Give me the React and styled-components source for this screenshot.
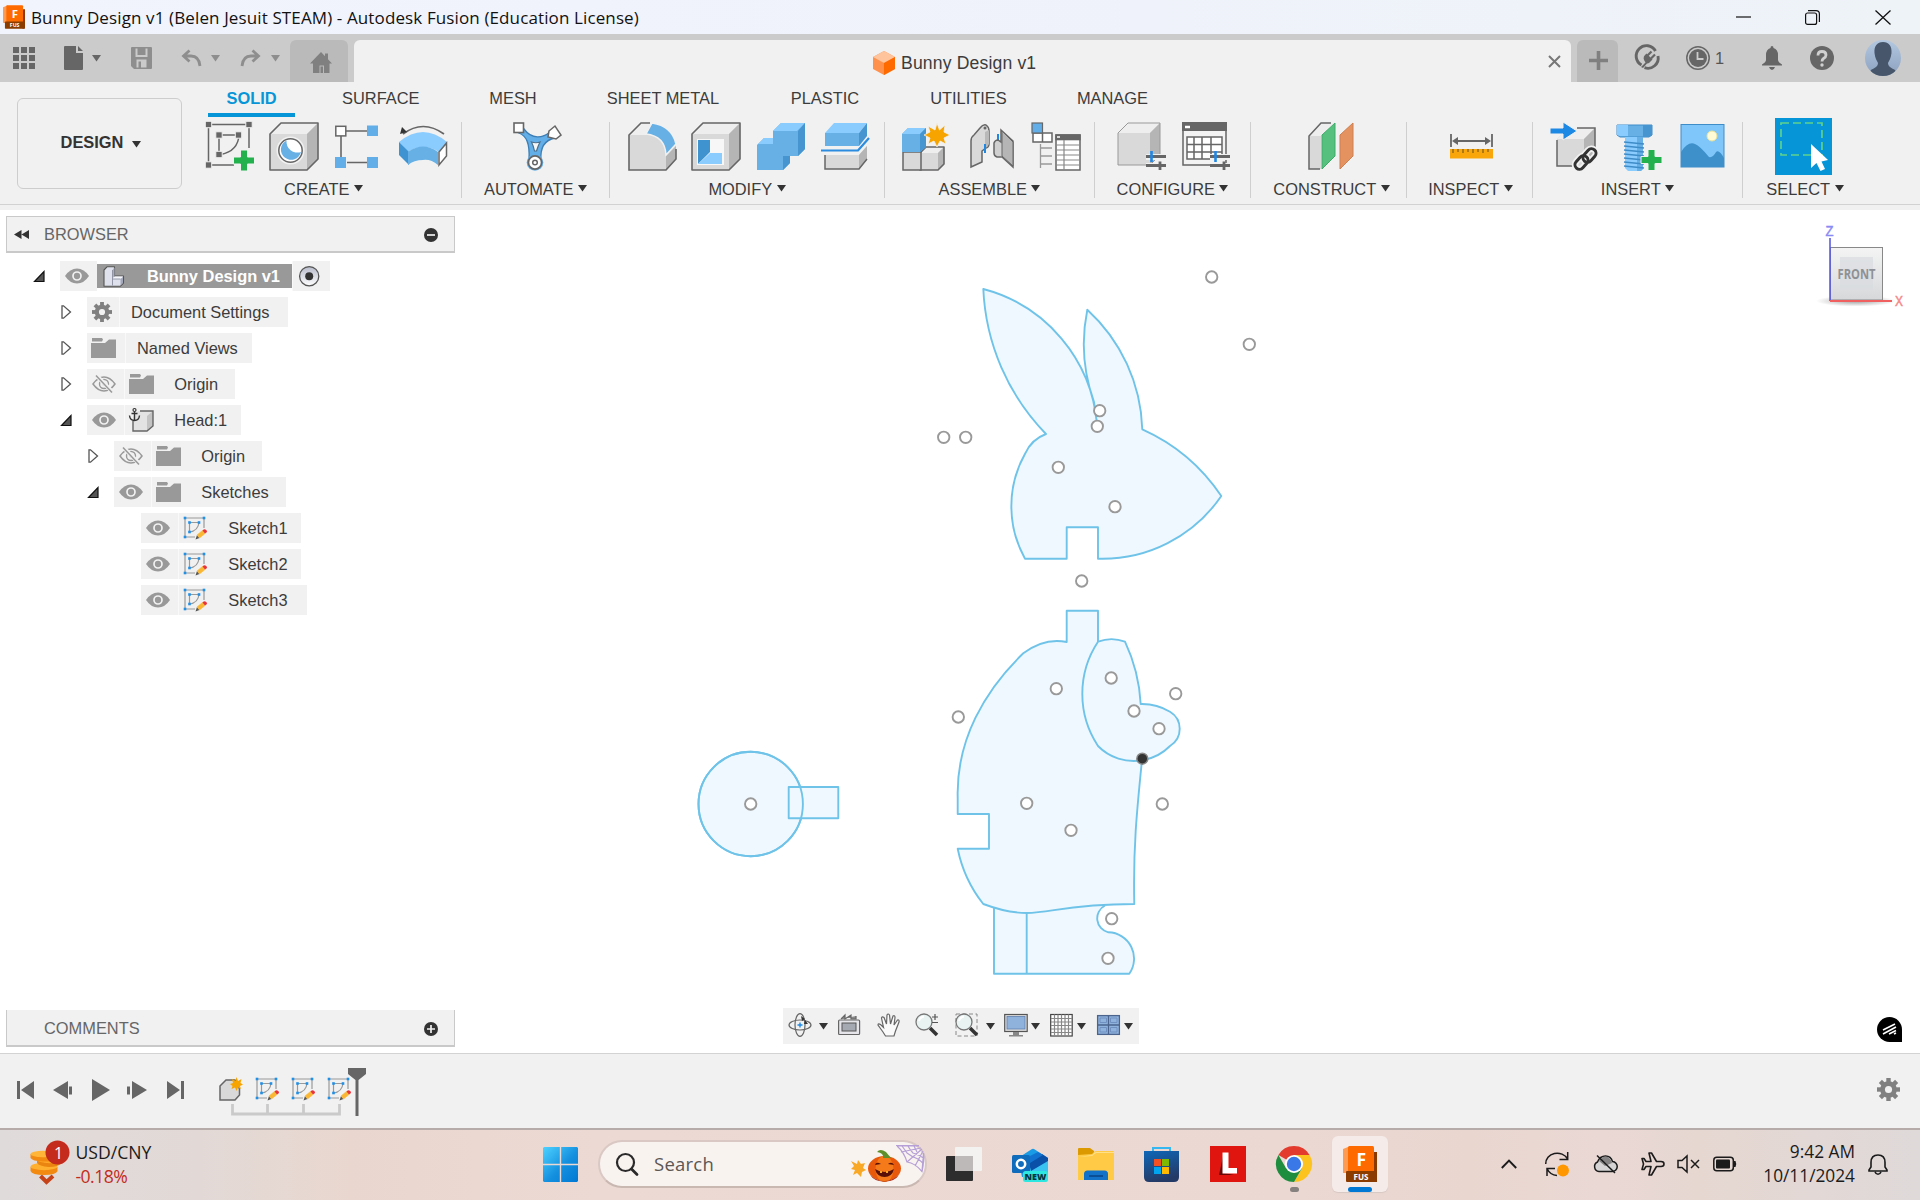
import React from 'react';
import styled, { createGlobalStyle } from 'styled-components';

const ui = '"Liberation Sans", Arial, sans-serif';
const sys = '"Open Sans", "Noto Sans", sans-serif';

const Global = createGlobalStyle`
  * { box-sizing: border-box; }
  body { margin: 0; background: #fff; overflow: hidden; }
`;

const Screen = styled.div`
  width: 1920px;
  height: 1200px;
  display: flex;
  flex-direction: column;
  font-family: ${ui};
  font-size: 16.4px;
  color: #3c3c3c;
  white-space: nowrap;
`;

const Glyph = styled.svg`
  display: block;
  flex: none;
  overflow: visible;
  margin-left: ${(p) => p.$ml || 0}px;
  margin-top: ${(p) => p.$mt || 0}px;
`;

function Icon({ w, h, ml, mt, vb, stretch, children }) {
  return (
    <Glyph width={w} height={h} viewBox={vb || `0 0 ${w} ${h}`} preserveAspectRatio={stretch ? 'none' : undefined} $ml={ml} $mt={mt} fill="none">
      {children}
    </Glyph>
  );
}

const Caret = ({ ml, mt, color = '#333', w = 9, h = 6.5 }) => (
  <Icon w={w} h={h} ml={ml} mt={mt} vb="0 0 9 8" stretch><path d="M0 0H9L4.5 8Z" fill={color} /></Icon>
);

/* ---------- title bar ---------- */
const TitleBar = styled.header`
  height: 34px;
  flex: none;
  display: flex;
  align-items: center;
  background: linear-gradient(90deg, #f1f4fc, #eff2fa 60%, #eef3f8);
  padding: 0 29px 0 3px;
`;
const WindowTitle = styled.h1`
  margin: 0 auto 0 6px;
  padding-top: 1px;
  font: 400 17px/24px ${sys};
  letter-spacing: 0.12px;
  color: #111;
`;

const FusionLogo = ({ w, h, ml }) => (
  <Icon w={w} h={h} ml={ml} vb="0 0 34 36">
    <path d="M1 4L7 0V27H1Z" fill="#ff8a3c" />
    <path d="M30 6L34 6V36H30Z" fill="#8a3a00" />
    <rect x="5" y="0" width="26" height="27" rx="1.5" fill="#ff6a00" />
    <path d="M0 3L5 1V27H0Z" fill="#ff9a52" />
    <rect x="3" y="25" width="30" height="11" rx="1" fill="#8c3b00" />
    <text x="18.3" y="19.5" fontFamily={sys} fontSize="17.5" fontWeight="700" fill="#fff" textAnchor="middle">F</text>
    <text x="18" y="33.5" fontFamily={sys} fontSize="8" fontWeight="700" fill="#fff" textAnchor="middle">FUS</text>
  </Icon>
);

/* ---------- document tabs ---------- */
const TabStrip = styled.nav`
  height: 48px;
  flex: none;
  display: flex;
  align-items: center;
  background: #cbcbcb;
`;
const SideTab = styled.div`
  align-self: flex-end;
  width: ${(p) => p.$w}px;
  height: 42px;
  margin-left: ${(p) => p.$ml}px;
  display: flex;
  justify-content: center;
  align-items: center;
  padding-top: 2px;
  background: #bababa;
  border-radius: 6px 6px 0 0;
`;
const DocTab = styled.div`
  align-self: flex-end;
  height: 42px;
  width: 1217px;
  margin-left: 6px;
  display: flex;
  align-items: center;
  padding: 4px 10px 0 0;
  background: #f1f1f1;
  border-radius: 6px 6px 0 0;
  font-size: 17.6px;
`;
const DocName = styled.span`
  margin-left: 6px;
  margin-right: auto;
  letter-spacing: 0.15px;
`;
const JobCount = styled.span`
  width: 10.5px;
  margin-left: 5px;
  color: #555;
`;

function DocumentTabs() {
  const g = '#666';
  const d = '#8e8e8e';
  return (
    <TabStrip>
      <Icon w={22} h={22} ml={13}>
        {[0, 8, 16].map((x) => [0, 8, 16].map((y) => <rect key={`${x}${y}`} x={x} y={y} width="6" height="6" fill={g} />))}
      </Icon>
      <Icon w={19} h={24} ml={29}><path d="M0 1Q0 0 1 0H12V7H19V23Q19 24 18 24H1Q0 24 0 23ZM14 0L19 5H14Z" fill={g} /></Icon>
      <Caret ml={9} color={g} />
      <Icon w={21} h={22} ml={29.5}>
        <path fillRule="evenodd" d="M1 0H20Q21 0 21 1V21Q21 22 20 22H3L0 19V1Q0 0 1 0ZM4.500 1.500V10H16.500V1.500H14.500V8H6.500V1.500ZM5.500 20.500H7.500V14.500H10V20.500H15.500V12.500H5.500Z" fill={d} />
      </Icon>
      <Icon w={20} h={18} ml={30}><path d="M7.500 1.500L1.500 7L7.500 12.500M1.500 7H9Q17 7 18 17" stroke={d} strokeWidth="2.800" /></Icon>
      <Caret ml={9.5} color={d} />
      <Icon w={20} h={18} ml={20}><path d="M12.500 1.500L18.500 7L12.500 12.500M18.500 7H11Q3 7 2 17" stroke={d} strokeWidth="2.800" /></Icon>
      <Caret ml={10.5} color={d} />
      <SideTab $w={58} $ml={10.5}>
        <Icon w={22} h={21} ml={4}>
          <path d="M0 11.500L11 0L15 4.200V1.500H18V7.300L22 11.500H19.500V21H14V13.500H9.500V21H3V11.500ZM10.500 14.500H13V21H10.500Z" fill="#808080" />
        </Icon>
      </SideTab>
      <DocTab>
        <Icon w={22} h={24} ml={519}>
          <path d="M11 0L22 6V18L11 24L0 18V6Z" fill="#ff914d" />
          <path d="M11 0L22 6L11 12L0 6Z" fill="#ffc49c" />
          <path d="M22 6V18L11 24V12Z" fill="#ff6a00" />
        </Icon>
        <DocName>Bunny Design v1</DocName>
        <Icon w={13} h={13} mt={-3}><path d="M1 1L12 12M12 1L1 12" stroke="#777" strokeWidth="2" /></Icon>
      </DocTab>
      <SideTab $w={41} $ml={6}>
        <Icon w={19} h={19} ml={2} mt={-3}><path d="M9.500 0V19M0 9.500H19" stroke="#808080" strokeWidth="3.600" /></Icon>
      </SideTab>
      <Icon w={24} h={24} ml={18}>
        <path d="M5.500 19A10.300 10.300 0 1 1 19.500 5M22 10A10.300 10.300 0 0 1 8.500 21.700" stroke={g} strokeWidth="2.900" />
        <path d="M5 21L9.500 16.500Q6 12 9 9L10.500 7.500L16.500 13.500L15 15Q12.500 18 11 17.500L7 22Z" fill={g} />
        <path d="M11.500 9.500L15.500 5.500M15 12.500L19 8.500" stroke={g} strokeWidth="2.200" />
      </Icon>
      <Icon w={24} h={24} ml={26}>
        <circle cx="12" cy="12" r="11.200" stroke={g} strokeWidth="1.500" />
        <circle cx="12" cy="12" r="9" fill={g} />
        <path d="M11.500 6V13H17.500" stroke="#cbcbcb" strokeWidth="1.800" />
      </Icon>
      <JobCount>1</JobCount>
      <Icon w={20} h={24} ml={36}>
        <path d="M10 0Q11.500 0 11.500 2Q16 3.500 16 9V14Q16 16 20 18.500V19.500H0V18.500Q4 16 4 14V9Q4 3.500 8.500 2Q8.500 0 10 0ZM7 21H13Q12 24 10 24Q8 24 7 21Z" fill={g} />
      </Icon>
      <Icon w={24} h={24} ml={28}>
        <circle cx="12" cy="12" r="12" fill={g} />
        <path d="M8 9.500Q8 5.500 12 5.500Q16 5.500 16 9Q16 11 13.500 12.500Q12 13.500 12 15.500" stroke="#d0d0d0" strokeWidth="2.800" />
        <circle cx="12" cy="19" r="1.700" fill="#d0d0d0" />
      </Icon>
      <Icon w={36} h={36} ml={31} vb="0 0 36 36">
        <defs>
          <linearGradient id="av" x1="0" y1="0" x2="0" y2="1"><stop stopColor="#b3c8e0" /><stop offset="1" stopColor="#8ba1bf" /></linearGradient>
          <clipPath id="avc"><circle cx="18" cy="18" r="18" /></clipPath>
        </defs>
        <g clipPath="url(#avc)">
          <rect width="36" height="36" fill="url(#av)" />
          <path d="M18 2C24 2 27 6 26.500 13C26 18 24 21 23 23C23 27 27 28 30 30L33 36H3L6 30C9 28 13 27 13 23C12 21 10 18 9.500 13C9 6 12 2 18 2Z" fill="#47566a" />
        </g>
      </Icon>
    </TabStrip>
  );
}

/* ---------- ribbon ---------- */
const Ribbon = styled.section`
  height: 128px;
  flex: none;
  display: flex;
  background: #f1f1f1;
`;
const RibbonBody = styled.div`
  flex: 1;
  display: flex;
  border-bottom: 1px solid #d2d2d2;
  height: 123px;
`;
const DesignButton = styled.button`
  width: 165px;
  height: 91px;
  margin: 16px 0 0 17px;
  display: flex;
  align-items: center;
  justify-content: center;
  border: 1.5px solid #cdcdcd;
  border-radius: 6px;
  background: #f1f1f1;
  font: 700 16.4px ${ui};
  color: #333;
  padding: 0 0 2px 3px;
`;
const RibbonMain = styled.div`
  flex: 1;
  display: flex;
  flex-direction: column;
`;
const RibbonTabs = styled.div`
  height: 35px;
  display: flex;
  padding-left: 26px;
`;
const RibbonTab = styled.div`
  width: ${(p) => p.$w}px;
  height: 35px;
  padding-top: 7px;
  text-align: center;
  line-height: 18px;
`;
const ActiveTab = styled(RibbonTab)`
  margin-right: 18.800px;
  border-bottom: 4px solid #0696d7;
  color: #0696d7;
  font-weight: 700;
`;
const Groups = styled.div`
  display: flex;
  padding: 5px 0 0 6px;
`;
const GroupBox = styled.div`
  width: ${(p) => p.$w}px;
  height: 76px;
  display: flex;
  flex-direction: column;
  align-items: center;
  border-right: ${(p) => (p.$last ? 0 : 1)}px solid #cfcfcf;
`;
const IconRow = styled.div`
  display: flex;
  gap: 15.6px;
  height: 49px;
  align-items: center;
  margin-left: ${(p) => p.$shift}px;
`;
const GroupLabel = styled.div`
  display: flex;
  align-items: center;
  height: 18px;
  margin-top: 9px;
  margin-left: ${(p) => p.$shift}px;
`;
const SelectTile = styled.div`
  width: 57px;
  height: 57px;
  display: flex;
  align-items: center;
  justify-content: center;
  background: #0696d7;
`;

const Group = ({ w, label, last, iconShift = 4, labelShift = 0, children }) => (
  <GroupBox $w={w} $last={last}>
    <IconRow $shift={iconShift}>{children}</IconRow>
    <GroupLabel $shift={labelShift}>{label}<Caret ml={4.5} mt={-1} /></GroupLabel>
  </GroupBox>
);

const R = ({ w = 49, children }) => <Icon w={w} h={49}>{children}</Icon>;
const ln = '#666';

const Cube = ({ x = 0, y = 0, w = 48, h = 47, d = 11, f = '#d9d9d9', t = '#eee', s = '#b5b5b5', st = ln, sw = 1.6 }) => (
  <g transform={`translate(${x} ${y})`}>
    <path d={`M0 ${d}L${d} 0H${w}V${h - d}L${w - d} ${h}H0Z`} fill={f} />
    <path d={`M0 ${d}L${d} 0H${w}L${w - d} ${d}Z`} fill={t} />
    <path d={`M${w} 0V${h - d}L${w - d} ${h}V${d}Z`} fill={s} />
    <path d={`M0 ${d}L${d} 0H${w}V${h - d}L${w - d} ${h}H0Z`} stroke={st} strokeWidth={sw} strokeLinejoin="round" />
  </g>
);

const GreenPlus = ({ x, y }) => (
  <path transform={`translate(${x} ${y})`} d="M7 0H14V7H21V14H14V21H7V14H0V7H7Z" fill="#22b14c" stroke="#f1f1f1" strokeWidth="1" />
);

const Sliders = ({ x, y }) => (
  <g transform={`translate(${x} ${y})`}>
    <path d="M0 6H20M0 15H20" stroke="#f1f1f1" strokeWidth="6" />
    <path d="M0 5.500H20M0 14.500H20M14 10.500V19" stroke={ln} strokeWidth="2.800" />
    <path d="M5.500 0V11" stroke="#1e88e5" strokeWidth="2.600" />
  </g>
);

const ribbonTabs = [
  ['SURFACE', 134],
  ['MESH', 130.4],
  ['SHEET METAL', 169.6],
  ['PLASTIC', 154.4],
  ['UTILITIES', 132.6],
  ['MANAGE', 155.4],
];

function RibbonBar() {
  return (
    <Ribbon>
      <RibbonBody>
        <DesignButton>DESIGN<Caret ml={9} mt={3} /></DesignButton>
        <RibbonMain>
          <RibbonTabs>
            <ActiveTab $w={87}>SOLID</ActiveTab>
            {ribbonTabs.map(([t, w]) => <RibbonTab key={t} $w={w}>{t}</RibbonTab>)}
          </RibbonTabs>
          <Groups>
            <Group w={274} label="CREATE" iconShift={5} labelShift={-2}>
              <R>
                <path d="M2.500 2.500H43V26M2.500 2.500V43H28M13 13H33M13 13V32M33 13Q32 29 15 32.500" stroke={ln} strokeWidth="1.500" />
                {[[2.500, 2.500], [43, 2.500], [2.500, 43], [13, 13], [32.500, 13], [13, 32.500]].map(([x, y]) => <rect key={`${x}-${y}`} x={x - 3.200} y={y - 3.200} width="6.400" height="6.400" fill={ln} stroke="#f1f1f1" strokeWidth="1" />)}
                <GreenPlus x={27.500} y={28} />
              </R>
              <R>
                <Cube y={1} />
                <circle cx="20.500" cy="28.500" r="13" fill="#fff" stroke="#f1f1f1" strokeWidth="2" />
                <circle cx="20.500" cy="28.500" r="11.700" fill="#fff" stroke={ln} strokeWidth="1.500" />
                <path d="M16.500 18.500A10.200 10.200 0 1 0 31 30A11 11 0 0 1 16.500 18.500Z" fill="#67b0e6" />
              </R>
              <R>
                <path d="M11 9H33M6 14V35M12 40.500H32" stroke={ln} strokeWidth="1.600" />
                <rect x=".800" y="4.300" width="10" height="9.600" fill="#fff" stroke={ln} strokeWidth="1.500" />
                <path d="M32 3.500H43V14H32ZM0 35H11V46H0ZM32 35H43V46H32Z" fill="#62aee8" />
              </R>
              <R>
                <path d="M4 12Q24 -3 45 12" stroke={ln} strokeWidth="1.700" />
                <path d="M1 12L3 5L8 10Z" fill="#333" />
                <path d="M0 20Q24 0 48 20L40 30Q24 20 9 30Z" fill="#8bccff" />
                <path d="M0 20L10 30V43L0 33Z" fill="#3f93d1" />
                <path d="M9 30Q24 19 39 30V43Q32 37 24 38Q15 38 9 43Z" fill="#67b0e6" />
                <path d="M47.500 21L40 30V43L47.500 34Z" fill="#fff" stroke={ln} strokeWidth="1.500" />
              </R>
            </Group>
            <Group w={148} label="AUTOMATE">
              <R>
                <path d="M6 11C13 14 17 20 16 38H28C27 25 32 18 42 16L37 10C30 16 19 18 11 7Z" fill="#62aee8" stroke="#3d7fb5" strokeWidth="1.300" />
                <path d="M18.500 20Q23 21.500 27 20Q25 24 23.500 29H21.500Q20.500 24 18.500 20Z" fill="#f6f6f6" stroke="#4c6f8c" strokeWidth="1.200" />
                <rect x="1" y="1" width="9.500" height="9.500" fill="#fff" stroke={ln} strokeWidth="1.600" />
                <path d="M36 9L42 4L48 13L43 17L35 15Z" fill="#fff" stroke={ln} strokeWidth="1.500" />
                <circle cx="22" cy="40.500" r="8.300" fill="#62aee8" />
                <circle cx="22" cy="40.500" r="6.600" fill="#fff" stroke={ln} strokeWidth="1.800" />
                <circle cx="22" cy="40.500" r="2.300" stroke={ln} strokeWidth="1.500" />
              </R>
            </Group>
            <Group w={275} label="MODIFY">
              <R>
                <path d="M1 13L13 1H24Q44 4 48 24V37L38 48H1Z" fill="#d9d9d9" />
                <path d="M1 13L13 1H24L18 13Z" fill="#efefef" />
                <path d="M38 34L48 24V37L38 48Z" fill="#b5b5b5" />
                <path d="M18 12L24 1Q44 4 48 22L38 33Q37 14 18 12Z" fill="#67b0e6" stroke="#f1f1f1" strokeWidth="1.500" />
                <path d="M22 1H13L1 13V48H38L48 37V27" stroke={ln} strokeWidth="1.600" />
              </R>
              <R>
                <Cube y={1} />
                <rect x="5" y="17" width="27" height="26" fill="#f7f7f7" />
                <path d="M6 18H18V30L6 42Z" fill="#3f93cf" />
                <path d="M6 42L18 31H30V42Z" fill="#8bccff" />
              </R>
              <R>
                <path d="M0 23L7 16H16V9L24 1H48V27L41 34H33V41L26 48H0Z" fill="#67b0e6" />
                <path d="M0 23L7 16H16V9L24 1H48L40 9H16V22H0Z" fill="#8bccff" />
                <path d="M48 1V27L41 34V9ZM33 34V41L26 48V34Z" fill="#4694d0" />
              </R>
              <R>
                <path d="M4 11L13 1H46L38 11Z" fill="#8bccff" />
                <path d="M4 11H38V24H4Z" fill="#67b0e6" />
                <path d="M46 1V14L38 24V11Z" fill="#4694d0" />
                <path d="M0 28.500H37L48 16" stroke="#2b8ce0" strokeWidth="2.200" />
                <path d="M4 33H38L46 24V37L38 47H4Z" fill="#d9d9d9" />
                <path d="M38 33L46 24V37L38 47Z" fill="#b5b5b5" />
                <path d="M4 33V47H38L46 37" stroke={ln} strokeWidth="1.500" />
              </R>
            </Group>
            <Group w={210} label="ASSEMBLE">
              <R>
                <Cube x={18} y={25} w={24} h={23} d={6} />
                <path d="M1 30H19V48H1Z" fill="#d9d9d9" stroke={ln} strokeWidth="1.500" />
                <path d="M0 12L6 6H24V25L18 30H0Z" fill="#67b0e6" />
                <path d="M0 12L6 6H24L18 12Z" fill="#8bccff" />
                <path d="M24 6V25L18 30V12Z" fill="#4694d0" />
                <path d="M35 1L37.500 8L43 3L42 10L48 13L42 16L44 22L38 19L35 25L32 19L26 22L28 16L22 13L28 10L26 4L33 8Z" fill="#f7a400" stroke="#f1f1f1" strokeWidth=".800" />
              </R>
              <R>
                <path d="M4 19Q4 15 7 13L13 6Q16 2 19 3Q22 5 22 9V22Q22 25 19 26L15 29V40L4 45Z" fill="#d9d9d9" stroke={ln} strokeWidth="1.500" />
                <path d="M22 8V22Q21 25 18 26V10Z" fill="#b9b9b9" />
                <circle cx="18" cy="6" r="1.500" fill={ln} />
                <path d="M18 22V31M31 12V21" stroke="#1e88e5" strokeWidth="2" />
                <path d="M34 8L46 19V45L35 35H30Q27 34 27 31V21Q28 18 31 18L34 20Z" fill="#d0d0d0" stroke={ln} strokeWidth="1.500" />
                <path d="M35 9L46 20V44L35 34Z" fill="#b5b5b5" stroke={ln} strokeWidth="1" />
              </R>
              <R>
                <path d="M1 11H20V20H1ZM10.500 11V20" fill="#fff" stroke={ln} strokeWidth="1.500" />
                <rect x="0" y="1" width="10.500" height="10" fill="#62aee8" stroke={ln} strokeWidth="1.200" />
                <path d="M8.500 22V46M8.500 26H20M8.500 34H20M8.500 42H20" stroke="#999" strokeWidth="1.300" />
                <rect x="24" y="13" width="24" height="35" fill="#fff" stroke={ln} strokeWidth="1.500" />
                <rect x="23.300" y="12.300" width="25.400" height="6" fill={ln} />
                <path d="M24 23H48M24 28H48M24 33H48M24 38H48M24 43H48M32 18V48" stroke="#888" strokeWidth="1.200" />
                <path d="M25 15H28" stroke="#fff" strokeWidth="1.500" />
              </R>
            </Group>
            <Group w={156} label="CONFIGURE">
              <R>
                <Cube y={1} w={42} h={42} d={10} st="#999" sw={1} />
                <Sliders x={28} y={29} />
              </R>
              <R>
                <path d="M1 1H44V43H1Z" fill="#f3f3f3" stroke={ln} strokeWidth="1.500" />
                <path d="M0 0H45V9H0Z" fill={ln} />
                <path d="M3 5H8" stroke="#fff" strokeWidth="2.500" />
                <path d="M5 15H40V37H5ZM5 22.500H40M5 30H40M12 15V37M20 15V37M29 15V37" stroke={ln} strokeWidth="1.500" fill="#fff" />
                <Sliders x={28} y={29} />
              </R>
            </Group>
            <Group w={156} label="CONSTRUCT" labelShift={6}>
              <R w={46}>
                <path d="M1 14H13V47H1Z" fill="#d9d9d9" />
                <path d="M1 14L13 1H25L13 14Z" fill="#eee" />
                <path d="M12 47H1V14L13 1H23" stroke={ln} strokeWidth="1.500" />
                <path d="M27 1V34L14 47V13Z" fill="#56c17f" stroke="#3fab69" />
                <path d="M45 1V34L32 47V13Z" fill="#e49260" stroke="#cf7f50" />
              </R>
            </Group>
            <Group w={126} label="INSPECT" labelShift={2}>
              <R w={43}>
                <path d="M1 12V25M42 12V25M4 19H39" stroke={ln} strokeWidth="1.800" />
                <path d="M2 19L8 15V23ZM41 19L35 15V23Z" fill={ln} />
                <rect x="0" y="27" width="43" height="9.500" fill="#f9a60a" />
                <path d="M3 27V31M8 27V30M13 27V31M18 27V30M23 27V31M28 27V30M33 27V31M38 27V30" stroke="#7a5a20" strokeWidth="1.200" />
              </R>
            </Group>
            <Group w={210} label="INSERT">
              <R>
                <path d="M7 17L18 6H45V34L34 44H7Z" fill="#d9d9d9" />
                <path d="M7 17L18 6H45L34 17Z" fill="#eee" />
                <path d="M45 6V34L34 44V17Z" fill="#b5b5b5" />
                <path d="M7 18V44H26M27 6H45V30" stroke={ln} strokeWidth="1.500" />
                <path d="M0 6H13V0L27 9L13 18V12H0Z" fill="#1e88e5" stroke="#f1f1f1" strokeWidth="1" />
                <g stroke="#f1f1f1" strokeWidth="6.500"><rect x="24" y="36" width="15" height="9" rx="4.500" transform="rotate(-48 31.500 40.500)" /><rect x="32" y="29" width="15" height="9" rx="4.500" transform="rotate(-48 39.500 33.500)" /></g>
                <g stroke="#333" strokeWidth="3"><rect x="24" y="36" width="15" height="9" rx="4.500" transform="rotate(-48 31.500 40.500)" /><rect x="32" y="29" width="15" height="9" rx="4.500" transform="rotate(-48 39.500 33.500)" /></g>
              </R>
              <R>
                <path d="M2 3H37V13L34 15H5L2 13Z" fill="#67b0e6" stroke="#3e8cc8" />
                <path d="M2 3H13V14H5L2 13Z" fill="#8bccff" /><path d="M28 3H37V13L34 15H28Z" fill="#4694d0" />
                <path d="M10 15H28V47L26 49H13L10 46Z" fill="#8bccff" /><path d="M22 15H28V47L26 49H22Z" fill="#67b0e6" />
                <path d="M9 20L29 22M9 24L29 26M9 28L29 30M9 32L29 34M9 36L29 38M9 40L29 42M9 44L29 46" stroke="#3e8cc8" strokeWidth="1.400" />
                <GreenPlus x={26} y={27.500} />
              </R>
              <R>
                <rect x="1" y="2.500" width="43" height="42.500" fill="#7fc6fb" stroke="#3e8cc8" />
                <path d="M1 30Q8 19 15 22Q20 24 29 35Q33 36 36 30Q39 27 44 36V45H1Z" fill="#3e90cb" />
                <circle cx="32" cy="14" r="5" fill="#fffbd6" stroke="#e8e29a" />
              </R>
            </Group>
            <Group w={124} label="SELECT" iconShift={-4} last>
              <SelectTile>
                <Icon w={49} h={50} ml={2} mt={1}>
                  <rect x="1" y="1" width="41" height="32" stroke="#5fd28a" strokeWidth="1.700" strokeDasharray="8 4" />
                  <path d="M31 22V46L36.500 41L40.500 49L45 47L41.500 39.500L48 38Z" fill="#fff" />
                </Icon>
              </SelectTile>
            </Group>
          </Groups>
        </RibbonMain>
      </RibbonBody>
    </Ribbon>
  );
}

/* ---------- viewport ---------- */
const Viewport = styled.main`
  height: 843px;
  flex: none;
  display: grid;
  grid-template: 843px / 1920px;
  background: #fff;
  & > * { grid-area: 1 / 1; }
`;
const SidePanels = styled.aside`
  width: 449px;
  margin: 6px 0 6px 6px;
  display: flex;
  flex-direction: column;
  justify-content: space-between;
`;
const PanelHeader = styled.div`
  height: 37px;
  display: flex;
  align-items: center;
  justify-content: space-between;
  padding: ${(p) => (p.$arrow ? 0 : 2)}px 16px 0 ${(p) => (p.$arrow ? 7 : 37)}px;
  background: #f1f1f1;
  border: 1px solid #c9c9c9;
  border-top-width: ${(p) => (p.$arrow ? 1 : 0)}px;
  border-bottom-width: 2px;
  color: #666;
`;
const PanelName = styled.div`
  display: flex;
  align-items: center;
  gap: 15px;
`;
const Tree = styled.div`
  display: flex;
  flex-direction: column;
  gap: 6px;
  margin-top: 8px;
`;
const TreeRow = styled.div`
  height: 30px;
  display: flex;
  align-items: center;
  padding-left: ${(p) => p.$indent}px;
`;
const Cell = styled.div`
  height: 30px;
  width: ${(p) => p.$w}px;
  display: flex;
  align-items: center;
  padding-left: ${(p) => p.$pl || 0}px;
  background: #f1f1f1;
  border-left: ${(p) => (p.$seam ? '1px solid #f9f9f9' : '0')};
`;
const RootLabel = styled.div`
  width: 195px;
  height: 24px;
  display: flex;
  align-items: center;
  gap: 22px;
  padding-left: 6px;
  background: #999;
  color: #fff;
  font-weight: 700;
`;

const Toggle = ({ open }) => open
  ? <Icon w={26} h={11}><path d="M.500 10.500L10 .500V10.500Z" fill="#555" stroke="#111" strokeWidth="1.200" /></Icon>
  : <Icon w={26} h={14}><path d="M1 .800H2.500L9.500 7L2.500 13.200H1Z" fill="#fff" stroke="#555" strokeWidth="1.300" /></Icon>;

const Eye = () => (
  <Icon w={24} h={16}>
    <path d="M0 8Q5 .500 12 .500Q19 .500 24 8Q19 15.500 12 15.500Q5 15.500 0 8Z" fill="#999" />
    <circle cx="12" cy="8" r="4" stroke="#f1f1f1" strokeWidth="1.700" />
  </Icon>
);
const EyeOff = () => (
  <Icon w={24} h={18}>
    <path d="M1 9Q6 2 12 2Q18 2 23 9Q18 16 12 16Q6 16 1 9Z" stroke="#999" strokeWidth="1.500" />
    <circle cx="12" cy="9" r="4.500" stroke="#999" strokeWidth="1.400" />
    <circle cx="12" cy="9" r="1.500" fill="#999" />
    <path d="M4 0L21 17.500" stroke="#f1f1f1" strokeWidth="4" /><path d="M4 .500L20 17.500" stroke="#999" strokeWidth="1.500" />
  </Icon>
);
const Folder = () => (
  <Icon w={25} h={20}><path d="M0 5H14L18 1.500H25V20H0ZM1 0H11L12 1.500L11 3.500H1Z" fill="#999" /></Icon>
);
const Gear = ({ w, ml, color = '#808080' }) => (
  <Icon w={w} h={w} ml={ml} vb="0 0 22 22">
    {[0, 45, 90, 135].map((a) => <rect key={a} x="8.900" y="0" width="4.200" height="22" fill={color} transform={`rotate(${a} 11 11)`} />)}
    <circle cx="11" cy="11" r="8" fill={color} /><circle cx="11" cy="11" r="3.400" fill="#f1f1f1" />
  </Icon>
);
const SketchIcon = () => (
  <Icon w={24} h={24}>
    <path d="M2 2H21V12M2 2V21H12M6.500 6.500H17M6.500 6.500V16Q15 15 16 6.500" stroke="#999" strokeWidth="1.200" />
    {[[2, 2], [21, 2], [2, 21], [6.500, 6.500], [16, 6.500], [6.500, 16]].map(([x, y]) => <rect key={`${x}-${y}`} x={x - 1.300} y={y - 1.300} width="2.600" height="2.600" fill="#1e90e8" />)}
    <path d="M12.500 23.500L14 19L16.500 22Z" fill="#555" />
    <path d="M14 19L19.500 14.500L22 17.500L16.500 22Z" fill="#f9b734" stroke="#f9b734" strokeWidth=".600" />
    <path d="M19.500 14.500Q22 12 24 15Q24.500 16 22 17.500Z" fill="#e8323c" />
  </Icon>
);
const HeadIcon = () => (
  <Icon w={25} h={24}>
    <path d="M4 9L9 3H24V18L18 23H4Z" fill="#e3e3e3" /><path d="M24 3V18L18 23V8Z" fill="#c3c3c3" />
    <path d="M11 3H24V18L18 23H4V13" stroke={ln} strokeWidth="1.400" />
    <path d="M5.500 4V12.500M2.500 5.500H8.500M.500 7.500Q1 12.500 5.500 12.500Q10 12.500 10.500 7.500" stroke="#333" strokeWidth="1.400" /><circle cx="5.500" cy="2" r="1.500" stroke="#333" strokeWidth="1.200" />
  </Icon>
);

const rows = [
  { indent: 55, icon: 'gear', label: 'Document Settings', pl: 11, w: 169 },
  { indent: 55, icon: 'folder', label: 'Named Views', pl: 11, w: 127 },
  { indent: 55, eye: 'off', icon: 'folder', label: 'Origin', pl: 16, w: 77 },
  { indent: 55, open: true, eye: 'on', icon: 'head', label: 'Head:1', pl: 16, w: 83 },
  { indent: 82, eye: 'off', icon: 'folder', label: 'Origin', pl: 16, w: 77 },
  { indent: 82, open: true, eye: 'on', icon: 'folder', label: 'Sketches', pl: 16, w: 101 },
  { indent: 109, leaf: true, eye: 'on', icon: 'sketch', label: 'Sketch1', pl: 16, w: 89 },
  { indent: 109, leaf: true, eye: 'on', icon: 'sketch', label: 'Sketch2', pl: 16, w: 89 },
  { indent: 109, leaf: true, eye: 'on', icon: 'sketch', label: 'Sketch3', pl: 16, w: 95 },
];
const icons = { gear: <Gear w={20} />, folder: <Folder />, head: <HeadIcon />, sketch: <SketchIcon /> };

function BrowserTree() {
  return (
    <Tree>
      <TreeRow $indent={28}>
        <Toggle open />
        <Cell $w={37} $pl={4.5}><Eye /></Cell>
        <RootLabel>
          <Icon w={22} h={21}>
            <path d="M1 4L4 .800H11.500V10H20.500V17L17.500 20.200H1Z" fill="#dfe2ec" stroke="#555" strokeWidth="1.100" strokeLinejoin="round" />
            <path d="M9.500 4L11.500 1.500V10L9.500 12Z" fill="#a9adbd" />
            <path d="M9.500 13L12 10.500H20L17.500 13Z" fill="#f6f7fb" />
            <path d="M20 11V17L17.500 19.500V13Z" fill="#a3a8ba" />
            <path d="M9.500 4V19.500M9.500 13H17.500" stroke="#8b90a2" strokeWidth=".900" />
          </Icon>
          Bunny Design v1
        </RootLabel>
        <Cell $w={38} $pl={6} $seam>
          <Icon w={21} h={21}>
            <defs><linearGradient id="rb" x1="0" y1="0" x2="0" y2="1"><stop stopColor="#b8bccb" /><stop offset="1" stopColor="#fff" /></linearGradient></defs>
            <circle cx="10.200" cy="10.200" r="9.600" fill="url(#rb)" stroke="#555" strokeWidth="1.300" /><circle cx="10.200" cy="10.200" r="4" fill="#333" />
          </Icon>
        </Cell>
      </TreeRow>
      {rows.map((r, i) => (
        <TreeRow key={i} $indent={r.leaf ? r.indent + 26 : r.indent}>
          {!r.leaf && <Toggle open={r.open} />}
          {r.eye && <Cell $w={37} $pl={4.5}>{r.eye === 'on' ? <Eye /> : <EyeOff />}</Cell>}
          <Cell $w={r.icon === 'gear' ? 32 : r.eye ? 34 : 38} $pl={r.icon === 'gear' ? 5 : r.eye ? 3.5 : 4} $seam={!!r.eye}>{icons[r.icon]}</Cell>
          <Cell $w={r.w} $pl={r.pl + (r.eye ? 0.3 : 0)} $seam={!r.eye}>{r.label}</Cell>
        </TreeRow>
      ))}
    </Tree>
  );
}

const marks = [
  [1211.7, 277], [1249.3, 344.3], [1099.7, 410.7], [1097.3, 426.3], [943.7, 437.3], [965.7, 437.3], [1058.3, 467.3], [1115, 506.7], [1081.7, 581],
  [1056.3, 688.7], [1111.2, 678], [1175.7, 693.7], [1134, 711], [1159, 728.7], [958.3, 717], [1026.7, 803.3], [1071, 830.3], [1162.3, 804], [1111.7, 918.7], [1108, 958.3], [750.7, 804],
];
const earL = 'M1097 424A153.500 153.500 0 0 0 983.300 289A222 222 0 0 0 1046 434';
const headLow = 'A37 37 0 0 0 1025.300 453.300A107.500 107.500 0 0 0 1025 558.700H1066.700V527.300H1098V558.700A144 144 0 0 0 1221.300 496A187 187 0 0 0 1142.300 429.300A169 169 0 0 0 1087.300 309.700A172 172 0 0 0 1094 402L1097 424';
const arm = 'M1098 641.700A38 38 0 0 1 1125 641.700A168 168 0 0 1 1140.700 704A54 54 0 0 1 1170 711.700A20 20 0 0 1 1170 746A50 50 0 0 1 1142.300 760.300A50 50 0 0 1 1098 746A94.500 94.500 0 0 1 1098 641.700Z';
const body = 'M1098 642V610.700H1066.700V642C1052 639 1037 643 1023.300 653.300C985 690 956 740 957.700 798V814H989V848.700H957.700A131 131 0 0 0 983.300 904C998 909.500 1012 913 1026.700 913C1052 912.500 1068 904.300 1134.300 904C1133 850 1136.700 812 1142 760';
const foot = 'M994 908V973.700H1129.300A26.300 26.300 0 0 0 1108.300 932.300A14.400 14.400 0 0 1 1105 905.500';

const SketchCanvas = () => (
  <svg width="1920" height="843" viewBox="0 210 1920 843" fill="none">
    <g fill="#eff8fe" stroke="#6fc3e9" strokeWidth="1.900" strokeLinejoin="round">
      <path d={earL + headLow} />
      <path d={`${foot}L1060 900Z`} stroke="none" />
      <path d={`${foot}M1026.700 913V973.700`} fill="none" />
      <path d={body} />
      <path d={arm} />
      <circle cx="750.700" cy="804" r="52.200" />
      <rect x="788.700" y="787" width="49.600" height="31.300" />
      <circle cx="750.700" cy="804" r="52.200" fill="none" />
    </g>
    {marks.map(([x, y]) => <circle key={`${x},${y}`} cx={x} cy={y} r="5.700" fill="#fff" stroke="#999" strokeWidth="1.900" />)}
    <circle cx="1142.300" cy="758.700" r="5.500" fill="#333" stroke="#888" strokeWidth="1.500" />
  </svg>
);

const RightColumn = styled.div`
  justify-self: end;
  display: flex;
  flex-direction: column;
  justify-content: space-between;
  align-items: flex-end;
  padding: 13px 15px 11px 0;
`;
const ViewCube = () => (
  <Icon w={84} h={90} vb="1821 223 84 90">
    <defs>
      <linearGradient id="vc" x1="0" y1="0" x2="0" y2="1"><stop stopColor="#f4f4f4" /><stop offset="1" stopColor="#d6d8da" /></linearGradient>
      <radialGradient id="sh"><stop stopColor="#777" stopOpacity=".700" /><stop offset="1" stopColor="#777" stopOpacity="0" /></radialGradient>
    </defs>
    <ellipse cx="1856" cy="301" rx="40" ry="5.500" fill="url(#sh)" />
    <rect x="1830.500" y="247.500" width="52" height="52.500" fill="url(#vc)" stroke="#888" />
    <rect x="1840" y="257" width="33" height="33" fill="#d9dcdf" opacity=".700" />
    <path d="M1830 238V301" stroke="#5a5ae8" strokeWidth="1.600" />
    <path d="M1830 301H1892" stroke="#f06060" strokeWidth="2" />
    <text x="1856.500" y="279" fontFamily={sys} fontSize="15" fontWeight="700" fill="#8d9196" textAnchor="middle" textLength="38" lengthAdjust="spacingAndGlyphs">FRONT</text>
    <text x="1829.500" y="236" fontFamily={ui} fontSize="15" stroke="#8a8af4" strokeWidth=".500" fill="#8a8af4" textAnchor="middle" textLength="8" lengthAdjust="spacingAndGlyphs">Z</text>
    <text x="1899" y="306" fontFamily={ui} fontSize="15" stroke="#f58a8a" strokeWidth=".500" fill="#f58a8a" textAnchor="middle" textLength="8" lengthAdjust="spacingAndGlyphs">X</text>
  </Icon>
);

const NavBar = styled.div`
  justify-self: start;
  align-self: end;
  width: 356px;
  height: 36px;
  margin: 0 0 9px 783px;
  padding-bottom: 2px;
  display: flex;
  align-items: center;
  background: #f1f1f1;
`;
const Lens = () => (
  <>
    <path d="M15 15L22 22" stroke="#333" strokeWidth="3.500" />
    <circle cx="9" cy="9" r="8" fill="#e9f3f2" stroke="#777" strokeWidth="1.300" />
    <path d="M4 8Q5 4 9 3.500" stroke="#fff" strokeWidth="2" />
  </>
);
const NavTools = () => (
  <NavBar>
    <Icon w={24} h={24} ml={5}>
      <ellipse cx="12" cy="12" rx="11" ry="5" stroke="#666" strokeWidth="1.200" /><ellipse cx="12" cy="12" rx="5" ry="11.300" stroke="#666" strokeWidth="1.200" />
      <path d="M8 8H16V16H8Z" fill="#f1f1f1" />
      <path d="M12 9.500V14.500M9.500 12H14.500" stroke="#1e88e5" strokeWidth="1.400" /><path d="M13 3L17 6L14 8ZM17 7L20 11L16 11Z" fill="#333" />
    </Icon>
    <Caret ml={7} mt={2} />
    <Icon w={22} h={22} ml={10}>
      <path d="M3 5L7 1V5L13 1V5H18V2" stroke="#666" strokeWidth="1.200" fill="#888" />
      <rect x=".600" y="6" width="21" height="14.500" rx="1" fill="#e6e6ea" stroke="#666" strokeWidth="1.200" /><rect x="4" y="9" width="14" height="8" fill="#a5a9b2" stroke="#555" />
    </Icon>
    <Icon w={24} h={24} ml={17}>
      <path d="M6 19L1 12Q1 10 3.500 11.500L6.500 14.500L4.500 5Q5 3 7 4.500L9.500 11L10 2Q11 0 12.500 2L13.500 11L16 3Q18 2 18 4.500L17 12L20.500 7Q22.500 6.500 22 9L18.500 18L17 23H8.500Z" fill="#fafafa" stroke="#666" strokeWidth="1.200" />
    </Icon>
    <Icon w={24} h={24} ml={14}><Lens /><path d="M20 1V7M17 4H23M17 9.500H23" stroke="#555" strokeWidth="1.200" /></Icon>
    <Icon w={23} h={24} ml={16}><rect x="1" y="1" width="21" height="22" stroke="#888" strokeDasharray="4 2.500" /><Lens /></Icon>
    <Caret ml={8} mt={2} />
    <Icon w={24} h={24} ml={9}>
      <rect x=".700" y="1.500" width="22.500" height="17" fill="#ddd" stroke="#555" strokeWidth="1.200" /><rect x="3" y="3.500" width="18" height="12.500" fill="#8fb2dd" stroke="#5f7fae" strokeWidth=".800" /><path d="M9 19H15V22H19V23.500H5V22H9Z" fill="#888" />
    </Icon>
    <Caret ml={3} mt={2} />
    <Icon w={23} h={24} ml={10}>
      <rect x=".700" y="1.500" width="21.500" height="21.500" fill="#fff" stroke="#444" strokeWidth="1.200" />
      {[4.500, 8, 11.500, 15, 18.500].map((v) => <path key={v} d={`M${v} 1.500V23M1 ${v + 1}H22`} stroke="#888" strokeWidth="1.200" />)}
    </Icon>
    <Caret ml={4} mt={2} />
    <Icon w={23} h={20} ml={11}>
      <rect x=".600" y=".600" width="21.800" height="18.800" fill="#8fb2dd" stroke="#4a648e" strokeWidth="1.300" />
      <path d="M11.500 0V20M0 10H23" stroke="#4a648e" strokeWidth="1.300" />
      <path d="M3 3H9.500V7.500H3ZM13.500 3H20V7.500H13.500ZM3 12.500H9.500V17H3ZM13.500 12.500H20V17H13.500Z" stroke="#6f90c0" strokeWidth="1" />
    </Icon>
    <Caret ml={4} mt={2} />
  </NavBar>
);

/* ---------- timeline ---------- */
const Timeline = styled.section`
  height: 75px;
  flex: none;
  display: flex;
  align-items: center;
  justify-content: space-between;
  padding: 0 20px 3px 0;
  background: #f1f1f1;
  border-top: 1px solid #d3d3d3;
`;
const Strip = styled.div`
  display: flex;
  align-items: center;
  height: 48px;
`;
const History = styled.div`
  display: flex;
  flex-direction: column;
  margin: 14px 0 0 35px;
`;
const Features = styled.div`
  display: flex;
  gap: 12px;
`;

function TimelineBar() {
  return (
    <Timeline>
      <Strip>
        <Icon w={17} h={18} ml={17}><path d="M0 0H3V18H0ZM17 0V18L4 9Z" fill={ln} /></Icon>
        <Icon w={19} h={18} ml={19}><path d="M15 0V18L0 9ZM16 5.500H19V13.500H16Z" fill={ln} /></Icon>
        <Icon w={18} h={22} ml={20}><path d="M0 0L18 11L0 22Z" fill={ln} /></Icon>
        <Icon w={20} h={18} ml={17}><path d="M5 0V18L20 9ZM0 5.500H3V13.500H0Z" fill={ln} /></Icon>
        <Icon w={17} h={18} ml={20}><path d="M14 0H17V18H14ZM0 0V18L13 9Z" fill={ln} /></Icon>
        <History>
          <Features>
            <Icon w={24} h={24}>
              <path d="M1 9L7 3H16L20.500 12V18L16 23H1Z" fill="#d9d9d9" stroke={ln} strokeWidth="1.500" />
              <path d="M17.500 0L19 4L22.500 2L21.500 6L24 7.500L21 9L22 12L19 10.500L17.500 14L16 10.500L12.500 12L13.500 9L11 7L14 6L13 2L16.500 4Z" fill="#f7a400" />
            </Icon>
            <SketchIcon /><SketchIcon /><SketchIcon />
          </Features>
          <Icon w={112} h={12} ml={12} mt={3}><path d="M1.500 0V10H108.500V0M36.500 0V9M72.500 0V9" stroke="#cacaca" strokeWidth="2.800" /></Icon>
        </History>
        <Icon w={18} h={48} ml={-3} mt={4}><path d="M0 0H18V6L10.500 12V48H7.500V12L0 6Z" fill={ln} /></Icon>
      </Strip>
      <Gear w={23} />
    </Timeline>
  );
}

/* ---------- taskbar ---------- */
const Taskbar = styled.footer`
  height: 72px;
  flex: none;
  display: flex;
  align-items: center;
  border-top: 2px solid #b7abaa;
  padding-bottom: 2px;
  background: linear-gradient(90deg, #e0dbdb 0, #e2d9d6 200px, #e9d7cf 350px, #ecd9d3 600px, #ebd8d3 1300px, #e9d6cf 1470px, #ead8d5 1600px, #e6d7d1 1700px, #dfd9d9 1920px);
  font-family: ${sys};
  color: #1b1b1b;
`;
const Stack = styled.div`
  display: flex;
  flex-direction: column;
  width: ${(p) => p.$w}px;
  margin-left: ${(p) => p.$ml}px;
  align-items: ${(p) => p.$align || 'flex-start'};
  font-size: ${(p) => p.$size}px;
  line-height: 24px;
`;
const Change = styled.span`
  color: #c42b1c;
  letter-spacing: -0.55px;
`;
const SearchBox = styled.div`
  width: 329px;
  height: 48px;
  margin-left: 20px;
  display: flex;
  align-items: center;
  border: 2px solid #d9c8c3;
  border-bottom-color: #c9b7b2;
  border-radius: 24px;
  background: #f9f3f0;
`;
const SearchText = styled.span`
  width: 197px;
  margin-left: 16px;
  font-size: 18.5px;
  line-height: 24px;
  padding-bottom: 1px;
  letter-spacing: 0.25px;
  color: #5c5755;
`;
const ActiveApp = styled.div`
  width: 56px;
  height: 56px;
  margin-left: 20px;
  display: flex;
  flex-direction: column;
  align-items: center;
  justify-content: space-between;
  padding-top: 10px;
  background: #f5ebe8;
  border-radius: 6px;
  box-shadow: 0 1px 1px #d8c8c4;
`;
const RunningMark = styled.div`
  width: ${(p) => (p.$active ? 24 : 9)}px;
  height: 5px;
  border-radius: 3px;
  background: ${(p) => (p.$active ? '#0078d4' : '#86807e')};
`;
const RunningApp = styled.div`
  height: 56px;
  margin-left: 30px;
  display: flex;
  flex-direction: column;
  align-items: center;
  justify-content: space-between;
  padding-top: 10px;
`;

function TaskbarRow() {
  const k = '#1b1b1b';
  return (
    <Taskbar>
      <Icon w={40} h={46} ml={30} mt={-2} vb="30 1137 40 46">
        <path d="M40.500 1173L46.500 1179L53 1173" stroke="#c6431a" strokeWidth="4" />
        <path d="M30.500 1164Q44 1169 57.500 1164V1168Q56 1172 44 1172Q32 1172 30.500 1168Z" fill="#f28a12" />
        <ellipse cx="44" cy="1163.500" rx="13.500" ry="3.700" fill="#ffb02e" />
        <path d="M37 1157Q50 1162 62 1157V1160Q58 1164 49 1164Q39 1163 37 1160Z" fill="#e98510" /><ellipse cx="49.500" cy="1156.500" rx="12.500" ry="3.700" fill="#ffa726" />
        <path d="M30.500 1151Q40 1156 56 1153V1156Q52 1159 43 1158.500Q32 1158 30.500 1155Z" fill="#f28a12" /><ellipse cx="43" cy="1151" rx="12.500" ry="3.300" fill="#ffb638" />
        <circle cx="57.500" cy="1149.500" r="12" fill="#c42b1c" />
        <text x="58.500" y="1155.500" fontFamily={sys} fontSize="16" fill="#fff" textAnchor="middle">1</text>
      </Icon>
      <Stack $w={100} $ml={5.5} $size={17.6}><span>USD/CNY</span><Change>-0.18%</Change></Stack>
      <Icon w={35} h={35} ml={367.5}>
        <defs><linearGradient id="wn" x1="0" y1="0" x2="1" y2="1"><stop stopColor="#4fd2ff" /><stop offset=".550" stopColor="#1490df" /><stop offset="1" stopColor="#0078d4" /></linearGradient></defs>
        <path d="M1 0H16.800V16.800H0V1ZM18.200 0H34L35 1V16.800H18.200ZM0 18.200H16.800V35H1L0 34ZM18.200 18.200H35V34L34 35H18.200Z" fill="url(#wn)" />
      </Icon>
      <SearchBox>
        <Icon w={22} h={23} ml={16}><circle cx="9.500" cy="9.500" r="8.500" stroke="#2a2a2a" strokeWidth="2.200" /><path d="M15.500 16L21 21.500" stroke="#2a2a2a" strokeWidth="2.800" strokeLinecap="round" /></Icon>
        <SearchText>Search</SearchText>
        <Icon w={74} h={40} vb="851 1144 74 40">
          <path d="M851 1161L857 1164L858 1160L861 1164L865 1163L863 1168L866 1170L862 1172L861 1177L857 1173L853 1175L855 1170L851 1169L854 1166Z" fill="#f9a825" />
          <ellipse cx="884.500" cy="1168.500" rx="16.500" ry="12.500" fill="#e8590c" /><ellipse cx="884.500" cy="1169" rx="9" ry="13" fill="#f47a1a" /><path d="M870 1175Q884 1187 899 1175Q894 1182 884.500 1181.500Q875 1182 870 1175Z" fill="#a82a12" />
          <path d="M883 1158Q884 1153 877 1152Q880 1148 886 1152L891 1158Z" fill="#5f8f2b" />
          <path d="M875 1165Q876 1161 881 1164ZM888 1164Q892 1161 894 1165Z" fill="#5a1208" /><path d="M875 1169Q884.500 1175 894 1169Q892 1177 884.500 1177Q877 1177 875 1169Z" fill="#5a1208" /><path d="M880 1171H882V1173H880ZM886 1171H888V1173H886Z" fill="#f9a825" />
          <g stroke="#b59fd6" strokeWidth="1.200"><path d="M896 1145.500H919M897 1146Q904 1152 907 1162Q915 1163 922 1171.500Q924.500 1160 923.500 1153M902 1146Q905 1150 907 1153Q912 1157 918 1159Q921 1161 923.500 1164M908 1146Q910 1150 913 1153Q919 1155 923.500 1158M919 1146L897 1146M921 1148L901 1152M922 1149L907 1162M923 1151L915 1166M923.500 1153L922 1171.500M914 1146L917 1152" /></g>
        </Icon>
      </SearchBox>
      <Icon w={36} h={35} ml={19}><rect x="0" y="9" width="27" height="25" rx="1" fill="#2d2d2d" /><rect x="9" y="0" width="27" height="24" rx="1" fill="#f4f2f2" opacity=".950" /><rect x="9" y="9" width="18" height="15" fill="#bdb9b8" /></Icon>
      <Icon w={36} h={36} ml={30} vb="0 0 36 36">
        <path d="M6 12L20 3Q21 2.500 22 3L36 12V28Q36 31 33 31H10Z" fill="#1a9be6" /><path d="M18 22L36 12V29L30 32H14Z" fill="#39c3f2" /><path d="M17 17L30 8L36 12V15L19 25Z" fill="#0a50a8" /><path d="M18 10L26 6L31 9L18 17Z" fill="#1272cf" />
        <rect y="9" width="18" height="18" rx="1.500" fill="#0f6cbd" /><circle cx="9" cy="18" r="4.200" stroke="#fff" strokeWidth="2.500" />
        <rect x="11" y="25" width="25" height="11" rx="2.500" fill="#2ee6e0" /><text x="23.500" y="34" fontFamily={sys} fontSize="9" fontWeight="800" fill="#083344" textAnchor="middle">NEW</text>
      </Icon>
      <Icon w={36} h={34} ml={30}>
        <path d="M0 2Q0 1 1 1H12L16 4V9H0Z" fill="#dc9a00" /><path d="M0 8L14 7L17 4H35Q36 4 36 5V33H0Z" fill="#ffca45" /><path d="M0 10L14 8L17 5H36V6L18 6L14 9Z" fill="#ffe08a" />
        <path d="M6 33V27Q6 23.500 9.500 23.500H26.500Q30 23.500 30 27V33Z" fill="#1272c8" /><path d="M11 29H25" stroke="#0a4f96" strokeWidth="2" />
      </Icon>
      <Icon w={35} h={36} ml={30}>
        <defs><linearGradient id="st" x1="0" y1="0" x2=".300" y2="1"><stop stopColor="#0f67b8" /><stop offset="1" stopColor="#243a66" /></linearGradient></defs>
        <path d="M9 7V2H26V7" stroke="#35b8f2" strokeWidth="2" /><path d="M0 5H35V31Q35 36 30 36H5Q0 36 0 31Z" fill="url(#st)" />
        <path d="M10 13H17V20H10Z" fill="#f25022" /><path d="M18 13H25V20H18Z" fill="#7fba00" /><path d="M10 21H17V28H10Z" fill="#00a4ef" /><path d="M18 21H25V28H18Z" fill="#ffb900" />
      </Icon>
      <Icon w={36} h={36} ml={31}>
        <rect width="36" height="36" fill="#e1150f" /><path d="M9 29L14 6V27L24 29Z" fill="#6a0805" />
        <path d="M12.500 6.500H18.500V22H27V27.500H12.500Z" fill="#fff" />
      </Icon>
      <RunningApp>
        <Icon w={36} h={36} vb="0 0 36 36">
          <path d="M18 18L2.400 9A18 18 0 0 1 33.600 9H18Z" fill="#e33b2e" /><path d="M18 18L33.600 9A18 18 0 0 1 18 36L25.800 22.500Z" fill="#fcc31e" /><path d="M18 18L25.800 22.500L18 36A18 18 0 0 1 2.400 9L10.200 22.500Z" fill="#1e8e3e" /><path d="M18 9H33.600L27 22Z" fill="#fcc31e" />
          <circle cx="18" cy="18" r="9" fill="#fff" /><circle cx="18" cy="18" r="7.200" fill="#3b78e7" />
        </Icon>
        <RunningMark />
      </RunningApp>
      <ActiveApp><FusionLogo w={34} h={36} /><RunningMark $active /></ActiveApp>
      <Icon w={16} h={10} ml={113}><path d="M.800 9L8 1.500L15.200 9" stroke={k} strokeWidth="1.900" /></Icon>
      <Icon w={25} h={25} ml={28}>
        <path d="M.700 12A11.500 10.500 0 0 1 22.500 7M14.500 7.500H22.700V0M2 24V16.500H10M2 16.500Q5 23 12 23.500" stroke={k} strokeWidth="1.500" /><circle cx="18" cy="18.500" r="6" fill="#ff9800" />
      </Icon>
      <Icon w={25} h={18} ml={22.5}>
        <path d="M6 16.500A5 5 0 0 1 4.500 7Q7 1 12.500 1Q18 1 19.500 6.500A5 5 0 0 1 19 16.500Z" fill="#d6d4d4" stroke={k} strokeWidth="1.500" /><path d="M6 6Q10 0 15 2Q18 4 19 8L12 11Z" fill="#858383" /><path d="M4 .500L22 18" stroke={k} strokeWidth="1.500" />
      </Icon>
      <Icon w={24} h={24} ml={23.5}>
        <path d="M23 12Q23 9.500 20 9.500H15.500L10.500 1H8L10 9.500H5L3 6.500H1L2.500 12L1 17.500H3L5 14.500H10L8 23H10.500L15.500 14.500H20Q23 14.500 23 12Z" stroke={k} strokeWidth="1.600" strokeLinejoin="round" />
      </Icon>
      <Icon w={23} h={18} ml={12}><path d="M1 5.500H5L10 1V17L5 12.500H1ZM14 5L22 13M22 5L14 13" stroke={k} strokeWidth="1.500" /></Icon>
      <Icon w={24} h={16} ml={13}><rect x=".800" y="1.300" width="19.500" height="13.500" rx="3" stroke={k} strokeWidth="1.500" /><rect x="3" y="3.500" width="14" height="9" rx="1" fill={k} /><path d="M21 5H22.500Q24 8 22.500 11H21Z" fill={k} /></Icon>
      <Stack $w={100} $ml={18} $align="flex-end" $size={17.300}><span>9:42 AM</span><span>10/11/2024</span></Stack>
      <Icon w={20} h={21} ml={13}><path d="M1 16L3 13V8.500Q3 1 10 1Q17 1 17 8.500V13L19 16V17H1ZM7 18Q8 20.300 10 20.300Q12 20.300 13 18" stroke={k} strokeWidth="1.600" /></Icon>
    </Taskbar>
  );
}

export default function App() {
  return (
    <Screen>
      <Global />
      <TitleBar>
        <FusionLogo w={22} h={24} />
        <WindowTitle>Bunny Design v1 (Belen Jesuit STEAM) - Autodesk Fusion (Education License)</WindowTitle>
        <Icon w={15} h={2}><path d="M0 1H15" stroke="#111" strokeWidth="1.200" /></Icon>
        <Icon w={15} h={15} ml={54}><rect x=".600" y="3" width="11" height="11.400" rx="2" stroke="#111" strokeWidth="1.200" /><path d="M3 .700H11Q14.400 .700 14.400 4V12" stroke="#111" strokeWidth="1.200" /></Icon>
        <Icon w={16} h={15} ml={55}><path d="M.500 .500L15.500 14.500M15.500 .500L.500 14.500" stroke="#111" strokeWidth="1.300" /></Icon>
      </TitleBar>
      <DocumentTabs />
      <RibbonBar />
      <Viewport>
        <SketchCanvas />
        <SidePanels>
          <div>
            <PanelHeader $arrow>
              <PanelName>
                <Icon w={15} h={9} mt={1}><path d="M7.500 0V9L0 4.500ZM15 0V9L7.500 4.500Z" fill="#333" /></Icon>
                BROWSER
              </PanelName>
              <Icon w={14} h={14} mt={1}><circle cx="7" cy="7" r="7" fill="#333" /><path d="M3 7H11" stroke="#f1f1f1" strokeWidth="1.700" /></Icon>
            </PanelHeader>
            <BrowserTree />
          </div>
          <PanelHeader>
            COMMENTS
            <Icon w={14} h={14}><circle cx="7" cy="7" r="7" fill="#333" /><path d="M3 7H11M7 3V11" stroke="#f1f1f1" strokeWidth="1.700" /></Icon>
          </PanelHeader>
        </SidePanels>
        <NavTools />
        <RightColumn>
          <ViewCube />
          <Icon w={28} h={25}><path d="M12.500 0A12.500 12.500 0 0 1 25 12.500V25H12.500A12.500 12.500 0 0 1 12.500 0Z" fill="#000" /><path d="M6 13L18 7M6 17L19 10M12 17L19 13.500M17 17L19 16" stroke="#fff" strokeWidth="1.600" /></Icon>
        </RightColumn>
      </Viewport>
      <TimelineBar />
      <TaskbarRow />
    </Screen>
  );
}
